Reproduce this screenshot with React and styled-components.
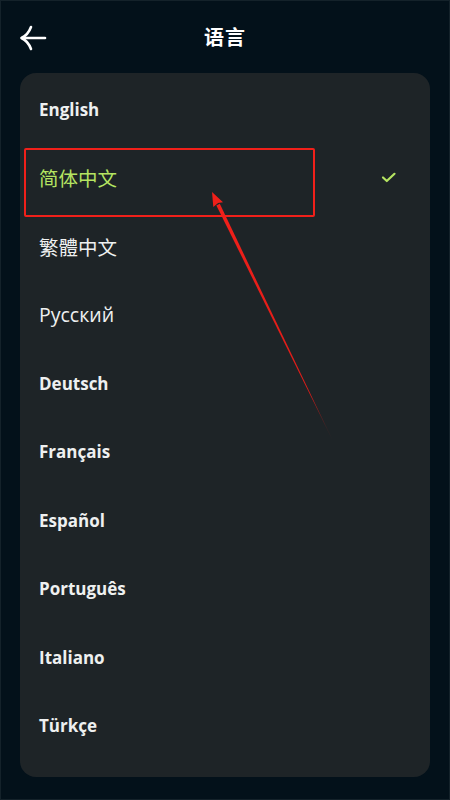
import React from 'react';
import styled, { createGlobalStyle } from 'styled-components';

const GlobalStyle = createGlobalStyle`
  html, body {
    margin: 0;
    padding: 0;
    background: #03111a;
  }
  body {
    font-family: "Open Sans", "Noto Sans CJK SC", sans-serif;
  }
`

const Screen = styled.div`
  position: relative;
  width: 450px;
  height: 800px;
  box-sizing: border-box;
  background: #03111a;
  border: 1px solid #14222a;
  overflow: hidden;
  display: flex;
  flex-direction: column;
`

const Header = styled.div`
  height: 72px;
  display: flex;
  align-items: center;
  justify-content: center;
  position: relative;
  flex-shrink: 0;
`

const BackButton = styled.button`
  position: absolute;
  left: 17px;
  top: 22px;
  width: 32px;
  height: 30px;
  padding: 0;
  border: none;
  background: none;
  display: flex;
  align-items: center;
  justify-content: center;
`

const Title = styled.h1`
  margin: 0;
  margin-top: -2px;
  font-family: "Noto Sans CJK SC", sans-serif;
  font-size: 20px;
  font-weight: 700;
  color: #ffffff;
  letter-spacing: 1px;
`

const Card = styled.div`
  margin: 0 19px;
  height: 704px;
  background: #1e2427;
  border-radius: 16px;
  padding-top: 2px;
  box-sizing: border-box;
  display: flex;
  flex-direction: column;
`

const Row = styled.div`
  height: 68.5px;
  flex-shrink: 0;
  display: flex;
  align-items: center;
  justify-content: space-between;
  padding: 0 33px 0 19px;
`

const fontsFor = {
  latin: `font-family: "Open Sans", sans-serif; font-size: 17px; font-weight: 700;`,
  cjk: `font-family: "Noto Sans CJK SC", sans-serif; font-size: 19.5px; font-weight: 400;`,
  cyr: `font-family: "Open Sans", sans-serif; font-size: 19.5px; font-weight: 400;`,
}

const Label = styled.span`
  ${p => fontsFor[p.$script]}
  color: ${p => (p.$active ? '#b5e461' : '#eef0f0')};
`

const Highlight = styled.div`
  position: absolute;
  left: 23px;
  top: 147px;
  width: 291px;
  height: 69px;
  box-sizing: border-box;
  border: 2px solid #f0201a;
  border-radius: 2px;
  pointer-events: none;
`

const Overlay = styled.svg`
  position: absolute;
  left: 0;
  top: 0;
  pointer-events: none;
`

const languages = [
  { name: 'English', script: 'latin' },
  { name: '简体中文', script: 'cjk', active: true },
  { name: '繁體中文', script: 'cjk' },
  { name: 'Русский', script: 'cyr' },
  { name: 'Deutsch', script: 'latin' },
  { name: 'Français', script: 'latin' },
  { name: 'Español', script: 'latin' },
  { name: 'Português', script: 'latin' },
  { name: 'Italiano', script: 'latin' },
  { name: 'Türkçe', script: 'latin' },
]

function App() {
  return (
    <>
      <GlobalStyle />
      <Screen>
        <Header>
          <BackButton aria-label="back">
            <svg width="32" height="30" viewBox="0 0 32 30" fill="none">
              <path d="M4 15 H27" stroke="#fff" strokeWidth="2.6" strokeLinecap="round" />
              <path d="M13 4 Q10 12 3.5 15 Q10 18 13 26" stroke="#fff" strokeWidth="2.6" strokeLinecap="round" strokeLinejoin="round" />
            </svg>
          </BackButton>
          <Title>语言</Title>
        </Header>
        <Card>
          {languages.map(lang => (
            <Row key={lang.name}>
              <Label $script={lang.script} $active={lang.active}>{lang.name}</Label>
              {lang.active && (
                <svg width="16" height="12" viewBox="0 0 16 12" fill="none">
                  <path d="M2 5.5 L5.8 9 L13.5 1.8" stroke="#b5e461" strokeWidth="2.2" strokeLinecap="round" strokeLinejoin="round" />
                </svg>
              )}
            </Row>
          ))}
        </Card>
        <Highlight />
        <Overlay width="450" height="800" viewBox="0 0 450 800">
          <defs>
            <linearGradient id="fade" x1="216" y1="204" x2="331" y2="438" gradientUnits="userSpaceOnUse">
              <stop offset="0" stopColor="#f0201a" />
              <stop offset="0.8" stopColor="#e01c18" />
              <stop offset="1" stopColor="#c01815" stopOpacity="0.2" />
            </linearGradient>
          </defs>
          <polygon points="218.8,202.8 215.4,204.4 331.5,439" fill="url(#fade)" />
          <polygon points="211,191 222,201.2 217.1,202 212.3,206" fill="#f0201a" />
        </Overlay>
      </Screen>
    </>
  )
}

export default App;
